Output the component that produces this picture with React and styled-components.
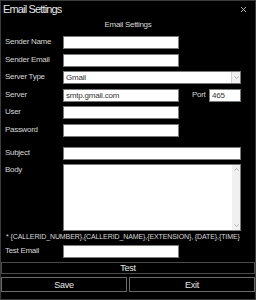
import styled, { createGlobalStyle } from "styled-components";

const GlobalStyle = createGlobalStyle`
  html, body {
    margin: 0;
    padding: 0;
    background: #000;
  }
  * {
    box-sizing: border-box;
  }
`;

const Window = styled.div`
  width: 256px;
  height: 300px;
  background: #000;
  border: 1px solid #3c3c3c;
  display: flex;
  flex-direction: column;
  font-family: "Liberation Sans", Arial, sans-serif;
  color: #dcdcdc;
  overflow: hidden;
`;

const TitleBar = styled.div`
  height: 16px;
  display: flex;
  align-items: center;
  justify-content: space-between;
  padding: 0 8px 0 2px;
`;

const Title = styled.span`
  font-size: 11px;
  letter-spacing: -0.85px;
  color: #e6e6e6;
`;

const CloseButton = styled.button`
  background: none;
  border: none;
  padding: 0;
  width: 7px;
  height: 7px;
  display: flex;
  cursor: pointer;
`;

const Heading = styled.div`
  height: 15px;
  line-height: 15px;
  text-align: center;
  font-size: 8px;
  letter-spacing: -0.3px;
  color: #d8d8d8;
`;

const Form = styled.div`
  display: flex;
  flex-direction: column;
  padding: 0 14px 0 4px;
  margin-top: 4px;
`;

const Row = styled.div`
  display: flex;
  align-items: flex-start;
  height: ${(p) => p.$h || 13}px;
  margin-top: ${(p) => (p.$mt ?? 4.6)}px;
`;

const Label = styled.label`
  width: ${(p) => p.$w || 58}px;
  flex-shrink: 0;
  font-size: 8px;
  line-height: 11px;
  letter-spacing: -0.3px;
  color: #d6d6d6;
`;

const TextInput = styled.input`
  width: ${(p) => (p.$w ? `${p.$w}px` : "100%")};
  height: 13px;
  border: 1px solid #7a7a7a;
  background: #fff;
  padding: 0 2px;
  margin: 0;
  font-family: inherit;
  font-size: 8px;
  letter-spacing: -0.2px;
  color: #333;
  outline: none;
`;

const SelectBox = styled.div`
  flex: 1;
  height: 13px;
  border: 1px solid #7a7a7a;
  background: #fff;
  display: flex;
  align-items: center;
  font-size: 8px;
  letter-spacing: -0.2px;
  color: #333;
  padding-left: 2px;
`;

const SelectValue = styled.span`
  flex: 1;
`;

const ArrowBox = styled.span`
  width: 9px;
  height: 11px;
  background: #f0f0f0;
  border-left: 1px solid #d4d4d4;
  display: flex;
  align-items: center;
  justify-content: center;
`;

const BodyBox = styled.div`
  flex: 1;
  height: 67px;
  border: 1px solid #7a7a7a;
  background: #fff;
  display: flex;
  justify-content: flex-end;
`;

const ScrollTrack = styled.div`
  width: 8px;
  background: #f0f0f0;
  display: flex;
  flex-direction: column;
  justify-content: space-between;
  align-items: center;
  padding: 3px 0;
`;

const Hint = styled.div`
  height: 9px;
  line-height: 9px;
  font-size: 7px;
  letter-spacing: -0.1px;
  white-space: nowrap;
  color: #d8d8d8;
  margin-top: 1px;
  margin-left: 1px;
`;

const Footer = styled.div`
  display: flex;
  flex-direction: column;
  gap: 3px;
  margin-top: 4px;
`;

const ButtonRow = styled.div`
  display: flex;
  gap: 2px;
`;

const Button = styled.button`
  flex: 1;
  height: 15px;
  background: #000;
  border: 1px solid ${(p) => (p.$dim ? "#4a4a4a" : "#6a6a6a")};
  color: #e8e8e8;
  font-family: inherit;
  font-size: 9px;
  letter-spacing: -0.2px;
  padding: 0;
  margin: 0;
  cursor: pointer;
`;

const Chevron = ({ up }) => (
  <svg width="5" height="3" viewBox="0 0 5 3">
    <path
      d={up ? "M0.5 2.5 L2.5 0.5 L4.5 2.5" : "M0.5 0.5 L2.5 2.5 L4.5 0.5"}
      fill="none"
      stroke="#a0a0a0"
      strokeWidth="0.8"
    />
  </svg>
);

export default function App() {
  return (
    <>
      <GlobalStyle />
      <Window>
        <TitleBar>
          <Title>Email Settings</Title>
          <CloseButton aria-label="close">
            <svg width="7" height="7" viewBox="0 0 7 7">
              <path d="M1 1 L6 6 M6 1 L1 6" stroke="#b0b0b0" strokeWidth="1" />
            </svg>
          </CloseButton>
        </TitleBar>
        <Heading>Email Settings</Heading>
        <Form>
          <Row $mt={0}>
            <Label>Sender Name</Label>
            <TextInput $w={116} />
          </Row>
          <Row>
            <Label>Sender Email</Label>
            <TextInput $w={116} />
          </Row>
          <Row>
            <Label>Server Type</Label>
            <SelectBox>
              <SelectValue>Gmail</SelectValue>
              <ArrowBox>
                <Chevron />
              </ArrowBox>
            </SelectBox>
          </Row>
          <Row>
            <Label>Server</Label>
            <TextInput $w={116} defaultValue="smtp.gmail.com" />
            <Label $w={17} style={{ marginLeft: 13 }}>
              Port
            </Label>
            <TextInput $w={32} defaultValue="465" />
          </Row>
          <Row>
            <Label>User</Label>
            <TextInput $w={116} />
          </Row>
          <Row>
            <Label>Password</Label>
            <TextInput $w={116} type="password" />
          </Row>
          <Row $mt={10}>
            <Label>Subject</Label>
            <TextInput />
          </Row>
          <Row $h={67} $mt={4}>
            <Label>Body</Label>
            <BodyBox>
              <ScrollTrack>
                <Chevron up />
                <Chevron />
              </ScrollTrack>
            </BodyBox>
          </Row>
          <Hint>
            * {"{CALLERID_NUMBER},{CALLERID_NAME},{EXTENSION}, {DATE},{TIME}"}
          </Hint>
          <Row $mt={4.4}>
            <Label>Test Email</Label>
            <TextInput $w={116} />
          </Row>
        </Form>
        <Footer>
          <Button $dim>Test</Button>
          <ButtonRow>
            <Button>Save</Button>
            <Button>Exit</Button>
          </ButtonRow>
        </Footer>
      </Window>
    </>
  );
}
